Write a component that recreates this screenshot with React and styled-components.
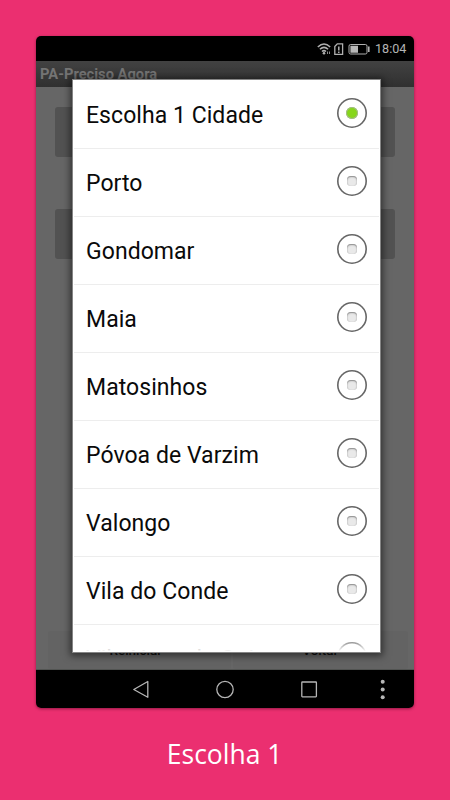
import React from "react";
import styled, { createGlobalStyle } from "styled-components";

const GlobalStyle = createGlobalStyle`
  * {
    box-sizing: border-box;
  }
  body {
    margin: 0;
    background: #eb2f70;
    font-family: Roboto, "Liberation Sans", sans-serif;
  }
`;

const Page = styled.div`
  width: 450px;
  height: 800px;
  padding-top: 36px;
  display: flex;
  flex-direction: column;
  align-items: center;
  overflow: hidden;
  background: #eb2f70;
`;

const Phone = styled.div`
  position: relative;
  width: 378px;
  height: 672px;
  flex: none;
  display: flex;
  flex-direction: column;
  overflow: hidden;
  border-radius: 5px;
  background: #000;
`;

const Shadow = styled.div`
  flex: none;
  border-radius: 5px;
  box-shadow: 0 1px 3px rgba(60, 0, 25, 0.5);
`;

const StatusBar = styled.div`
  height: 25px;
  flex: none;
  padding-right: 8px;
  display: flex;
  justify-content: flex-end;
  align-items: center;
  color: #b4b4b4;
  svg {
    display: block;
  }
`;

const Clock = styled.span`
  width: 31px;
  margin-left: 4px;
  font-size: 12.6px;
  line-height: 25px;
  white-space: nowrap;
`;

const TitleBar = styled.div`
  height: 26px;
  flex: none;
  padding-left: 4px;
  background: linear-gradient(#424242, #303030);
  color: #747474;
  font-size: 14.7px;
  font-weight: 700;
  line-height: 27px;
`;

const Screen = styled.div`
  flex: 1;
  display: flex;
  flex-direction: column;
  padding-top: 20px;
  background: #666;
  border-bottom: 1px solid #525452;
`;

const Field = styled.div`
  height: 50px;
  flex: none;
  margin: 0 19px 52px;
  border-radius: 3px;
  background: #525252;
`;

const Footer = styled.div`
  height: 38px;
  margin: auto 6px 0 12px;
  display: flex;
  gap: 2px;
`;

const FooterButton = styled.div`
  flex: 1;
  padding-top: 12px;
  padding-right: ${(props) => props.$shift || 0}px;
  border-radius: 3px;
  background: #636363;
  color: #111;
  font-size: 13.5px;
  font-weight: 500;
  line-height: 14px;
  text-align: center;
`;

const NavBar = styled.div`
  height: 38px;
  flex: none;
  svg {
    display: block;
  }
`;

const Dialog = styled.div`
  position: absolute;
  left: 36px;
  top: 43px;
  width: 309px;
  height: 574px;
  overflow: hidden;
  border: 1px solid #858585;
  background: #fff;
  box-shadow: 0 1px 7px 2px rgba(0, 0, 0, 0.5);
`;

const Row = styled.div`
  height: 68px;
  margin: 0 1px;
  padding: 0 12px;
  display: flex;
  justify-content: space-between;
  border-top: 1px solid ${(props) => (props.$first ? "#fff" : "#ededed")};
  color: #0a0a0a;
`;

const Label = styled.span`
  font-size: 23px;
  line-height: 70px;
  letter-spacing: 0.05px;
  white-space: nowrap;
`;

const Radio = styled.div`
  width: 30px;
  height: 30px;
  margin-top: 17px;
  display: flex;
  justify-content: center;
  align-items: center;
  border-radius: 50%;
  box-shadow: inset 0 0 0 1.6px #666;
`;

const Dot = styled.div`
  width: ${(props) => (props.$on ? 12 : 10)}px;
  height: ${(props) => (props.$on ? 12 : 10)}px;
  border-radius: ${(props) => (props.$on ? "50%" : "4px")};
  background: ${(props) => (props.$on ? "#86d61b" : "#e9e9e9")};
  box-shadow: ${(props) =>
    props.$on
      ? "inset 0 0 0 1px #a5b890"
      : "inset 0 1px 1.5px #888, inset 0 0 1px #bbb"};
`;

const Fade = styled.div`
  position: absolute;
  left: 0;
  right: 0;
  bottom: 0;
  height: 14px;
  background: linear-gradient(rgba(255, 255, 255, 0), #fff 95%);
`;

const Caption = styled.div`
  margin-top: 26px;
  color: #fff;
  font-family: "Open Sans", "Noto Sans", sans-serif;
  font-size: 28px;
  line-height: 38px;
  transform: translateX(-0.5px) scaleX(0.945);
`;

const cities = [
  "Escolha 1 Cidade",
  "Porto",
  "Gondomar",
  "Maia",
  "Matosinhos",
  "Póvoa de Varzim",
  "Valongo",
  "Vila do Conde",
  "Vila Nova de Gaia",
];

const StatusIcons = () => (
  <svg width="54" height="14" viewBox="0 0 54 14" fill="none" stroke="#b0b0b0">
    <path d="M0.8 5Q7 -0.9 13.2 5M2.9 7.3Q7 3.5 11.1 7.3M5 9.5Q7 7.7 9 9.5" strokeWidth="1.5" />
    <circle cx="7" cy="11.3" r="1.3" fill="#b0b0b0" stroke="none" />
    <path d="M10.5 9.5v2.5M12.5 9.5v2.5" strokeWidth="0.8" />
    <path d="M17.8 4.5L20.3 1.8H25.6V12.4H17.8Z" strokeWidth="1.3" />
    <path d="M21.8 4.6v4M21.8 9.5v1.5" strokeWidth="1.5" />
    <rect x="32" y="2.5" width="18" height="9.5" rx="1.6" strokeWidth="1" />
    <path d="M33.4 3.8h7.6v6.9h-7.6z" fill="#b8b8b8" stroke="none" />
    <path d="M51.8 4.6v5.4" strokeWidth="1.6" />
  </svg>
);

const NavIcons = () => (
  <svg width="378" height="38" viewBox="0 0 378 38" fill="none" stroke="#b5b5b5" strokeWidth="1.3">
    <path d="M97.8 19.5L111.8 11.5V27.3Z" strokeLinejoin="round" />
    <circle cx="189" cy="19.5" r="8.2" />
    <rect x="265.8" y="12" width="14.6" height="14.8" rx="0.5" />
    <g fill="#b8b8b8" stroke="none">
      <circle cx="346.7" cy="11.8" r="2" />
      <circle cx="346.7" cy="19.5" r="2" />
      <circle cx="346.7" cy="27.2" r="2" />
    </g>
  </svg>
);

const App = () => {
  return (
    <Page>
      <GlobalStyle />
      <Shadow>
        <Phone>
          <StatusBar>
            <StatusIcons />
            <Clock>18:04</Clock>
          </StatusBar>
          <TitleBar>PA-Preciso Agora</TitleBar>
          <Screen>
            <Field />
            <Field />
            <Footer>
              <FooterButton $shift={7}>Reiniciar</FooterButton>
              <FooterButton>Voltar</FooterButton>
            </Footer>
          </Screen>
          <NavBar>
            <NavIcons />
          </NavBar>
          <Dialog>
            {cities.map((city, i) => (
              <Row key={city} $first={i === 0}>
                <Label>{city}</Label>
                <Radio>
                  <Dot $on={i === 0} />
                </Radio>
              </Row>
            ))}
            <Fade />
          </Dialog>
        </Phone>
      </Shadow>
      <Caption>Escolha 1</Caption>
    </Page>
  );
};

export default App;
